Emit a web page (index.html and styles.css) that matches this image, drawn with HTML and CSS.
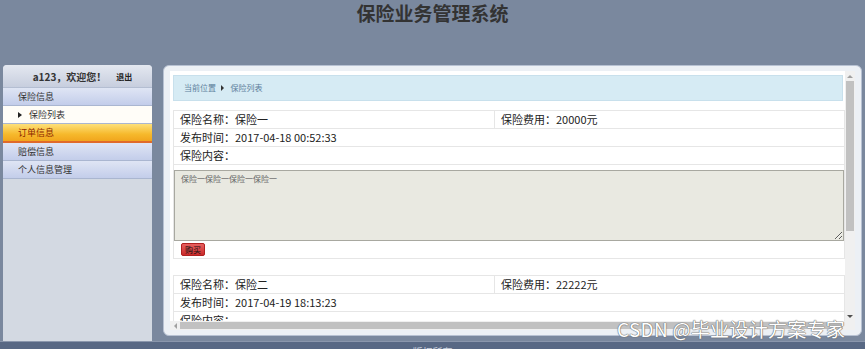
FILE: index.html
```html
<!DOCTYPE html>
<html lang="zh-CN">
<head>
    <meta charset="UTF-8">
    <title>保险业务管理系统</title>
    <link rel="stylesheet" href="styles.css">
</head>
<body>
    <div class="top">
        <h1>保险业务管理系统</h1>
    </div>

    <div class="wrap">
        <div class="side">
            <div class="side-head">
                <span class="user">a123，欢迎您！</span>
                <a href="#" class="logout">退出</a>
            </div>
            <ul class="menu">
                <li class="menu-item">保险信息</li>
                <li class="sub-item"><span class="arrow"></span>保险列表</li>
                <li class="menu-item active">订单信息</li>
                <li class="menu-item">赔偿信息</li>
                <li class="menu-item">个人信息管理</li>
            </ul>
        </div>

        <div class="main">
            <div class="frame">
                <div class="view">
                    <div class="inner">
                        <div class="crumb">
                            当前位置 <span class="crumb-arrow"></span> 保险列表
                        </div>

                        <table class="item">
                            <tr>
                                <td class="half">保险名称：保险一</td>
                                <td>保险费用：20000元</td>
                            </tr>
                            <tr><td colspan="2">发布时间：2017-04-18 00:52:33</td></tr>
                            <tr><td colspan="2">保险内容：</td></tr>
                            <tr>
                                <td colspan="2" class="content">
                                    <textarea readonly>保险一保险一保险一保险一</textarea>
                                    <button type="button" class="buy">购买</button>
                                </td>
                            </tr>
                        </table>

                        <table class="item">
                            <tr>
                                <td class="half">保险名称：保险二</td>
                                <td>保险费用：22222元</td>
                            </tr>
                            <tr><td colspan="2">发布时间：2017-04-19 18:13:23</td></tr>
                            <tr><td colspan="2">保险内容：</td></tr>
                            <tr>
                                <td colspan="2" class="content">
                                    <textarea readonly>保险二保险二保险二</textarea>
                                    <button type="button" class="buy">购买</button>
                                </td>
                            </tr>
                        </table>
                    </div>
                </div>

                <!-- scrollbars of the content frame -->
                <div class="vbar">
                    <span class="btn up"></span>
                    <div class="track"><div class="vthumb"></div></div>
                    <span class="btn down"></span>
                </div>
                <div class="hbar">
                    <span class="btn left"></span>
                    <div class="track"><div class="hthumb"></div></div>
                </div>
                <div class="corner"></div>
            </div>
        </div>
    </div>

    <div class="foot">版权所有</div>

    <div class="mark">CSDN @毕业设计方案专家</div>
</body>
</html>
```

FILE: styles.css
```css
html, body {
    height: 100%;
}
body {
    margin: 0;
    padding: 0;
    background-color: #7a889e;
    font-family: "Noto Sans CJK SC", "DejaVu Sans", sans-serif;
    color: #222;
    overflow: hidden;
    position: relative;
}
.top {
    height: 65px;
}
h1 {
    margin: 0;
    padding-top: 1px;
    text-align: center;
    font-size: 19px;
    line-height: 24px;
    color: #333;
}
.wrap {
    display: flex;
    height: 276px;
    padding-left: 3px;
}
.side {
    width: 149px;
    background-color: #d3d9e2;
    border-radius: 4px 4px 0 0;
    overflow: hidden;
}
.side-head {
    height: 22px;
    display: flex;
    align-items: center;
    justify-content: center;
    gap: 10px;
    background: linear-gradient(#e4e8f0, #c7cede);
    border-bottom: 1px solid #b4bed2;
    font-size: 10px;
    font-weight: bold;
    color: #333;
}
.user {
    margin-left: 10px;
}
.logout {
    font-size: 8px;
    color: #222;
    text-decoration: none;
}
.menu {
    list-style: none;
    margin: 0;
    padding: 0;
}
.menu li {
    height: 17px;
    line-height: 17px;
    font-size: 9px;
    padding-left: 15px;
    border-bottom: 1px solid #aab6d0;
}
.menu-item {
    background: linear-gradient(#dfe5f4, #c3cdea);
    color: #333;
}
.sub-item {
    background-color: #fffdf8;
    color: #333;
    display: flex;
    align-items: center;
}
.arrow {
    display: inline-block;
    width: 0;
    height: 0;
    border-top: 3px solid transparent;
    border-bottom: 3px solid transparent;
    border-left: 4px solid #222;
    margin-right: 7px;
}
.menu .active {
    background: linear-gradient(#fde07a, #f6b92c 60%, #f1a51d);
    border-bottom: 2px solid #e06a2a;
    color: #8e2800;
}
.main {
    margin-left: 11px;
    width: 699px;
    height: 271px;
    box-sizing: border-box;
    background-color: #ecf0f5;
    border: 1px solid #b7c1d2;
    border-radius: 6px;
    padding: 5px 6px 5px 6px;
}
.frame {
    height: 100%;
    display: grid;
    grid-template-columns: 1fr 10px;
    grid-template-rows: 1fr 9px;
    background-color: #fff;
}
.view {
    overflow: hidden;
}
.vbar {
    display: flex;
    flex-direction: column;
    background-color: #f0f0f0;
}
.hbar {
    display: flex;
    background-color: #f0f0f0;
}
.corner {
    background-color: #f0f0f0;
}
.track {
    flex: 1;
    position: relative;
}
.vthumb {
    margin: 0 1px;
    height: 150px;
    background-color: #c1c1c1;
}
.hthumb {
    margin: 1px 2px 1px 0;
    height: 7px;
    background-color: #c1c1c1;
}
.btn {
    display: flex;
    align-items: center;
    justify-content: center;
    width: 10px;
    height: 10px;
    flex: none;
}
.btn::after {
    content: "";
    width: 0;
    height: 0;
}
.up::after {
    border-left: 3px solid transparent;
    border-right: 3px solid transparent;
    border-bottom: 3px solid #a0a0a0;
}
.down::after {
    border-left: 3px solid transparent;
    border-right: 3px solid transparent;
    border-top: 3px solid #505050;
}
.left {
    height: 9px;
}
.left::after {
    border-top: 3px solid transparent;
    border-bottom: 3px solid transparent;
    border-right: 3px solid #a0a0a0;
}
.inner {
    width: 688px;
    padding: 4px 0 0 3px;
}
.crumb {
    width: 658px;
    height: 24px;
    line-height: 24px;
    padding-left: 10px;
    background-color: #d6ebf4;
    border: 1px solid #c8e0ec;
    font-size: 8px;
    color: #5d7f9c;
    margin-bottom: 9px;
}
.crumb-arrow {
    display: inline-block;
    width: 0;
    height: 0;
    border-top: 3px solid transparent;
    border-bottom: 3px solid transparent;
    border-left: 3px solid #333;
    margin: 0 5px 0 3px;
}
.item {
    width: 670px;
    border-collapse: collapse;
    border: 1px solid #e2e2e2;
    font-size: 11px;
    margin-bottom: 16px;
}
.item td {
    height: 17px;
    padding: 0 0 0 6px;
    border: 1px solid #e6e6e6;
    line-height: 17px;
}
.item .half {
    width: 314px;
}
.item .content {
    padding: 5px 0 2px 0;
    line-height: normal;
    height: auto;
}
textarea {
    display: block;
    width: 670px;
    height: 71px;
    box-sizing: border-box;
    margin: 0;
    padding: 2px 6px;
    background-color: #e9e9e1;
    border: 1px solid #a8a8a0;
    font-family: "Noto Sans CJK SC", "DejaVu Sans", sans-serif;
    font-size: 8px;
    color: #666;
    resize: both;
}
.buy {
    display: block;
    margin: 2px 0 0 7px;
    width: 24px;
    height: 13px;
    padding: 0;
    background: linear-gradient(#e86060, #c92a2a);
    border: 1px solid #b02020;
    border-radius: 2px;
    font-family: "Noto Sans CJK SC", "DejaVu Sans", sans-serif;
    font-size: 8px;
    line-height: 11px;
    color: #111;
    cursor: pointer;
}
.foot {
    height: 8px;
    background-color: #586884;
    border-top: 1px solid #8a96ac;
    text-align: center;
    font-size: 10px;
    line-height: 20px;
    color: #c8d0de;
    overflow: hidden;
}
.mark {
    position: absolute;
    left: 617px;
    top: 315px;
    font-family: "Noto Sans CJK SC", "DejaVu Sans", sans-serif;
    font-size: 19px;
    color: #fff;
    text-shadow: 0 0 1px #666, 0 0 1px #666, 0 0 1px #888;
    letter-spacing: 0.3px;
}
```
